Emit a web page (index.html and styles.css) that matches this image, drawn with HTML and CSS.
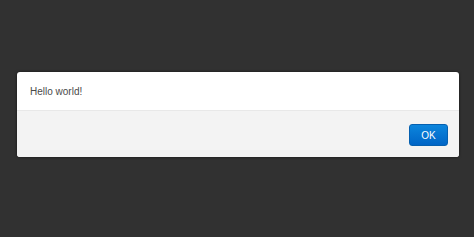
FILE: index.html
```html
<!DOCTYPE html>
<html>
<head>
<meta charset="utf-8">
<link rel="stylesheet" href="styles.css">
</head>
<body>
<div class="page">
  <div class="dialog">
    <div class="dialog-body">Hello world!</div>
    <div class="dialog-footer">
      <button class="btn-ok">OK</button>
    </div>
  </div>
</div>
</body>
</html>
```
FILE: styles.css
```css
html, body {
  margin: 0;
  padding: 0;
  background: #313131;
  height: 100%;
}
.page {
  padding: 72px 15px 0 17px;
}
.dialog {
  background: #fff;
  border-radius: 3px;
  box-shadow: 0 0 3px rgba(0,0,0,0.6);
  overflow: hidden;
  font-family: "Liberation Sans", Arial, sans-serif;
}
.dialog-body {
  height: 38px;
  padding: 0 13px;
  display: flex;
  align-items: center;
  font-size: 10px;
  color: #4a4a4a;
  border-bottom: 1px solid #e8e8e8;
}
.dialog-footer {
  background: #f3f3f3;
  height: 46px;
  display: flex;
  justify-content: flex-end;
  align-items: center;
  padding: 0 11px;
}
.btn-ok {
  width: 39px;
  height: 22px;
  border: 1px solid #0560b0;
  border-radius: 3px;
  background: linear-gradient(#0c85dc, #0065c6);
  color: #fff;
  font-family: "Liberation Sans", Arial, sans-serif;
  font-size: 10px;
  padding: 0;
  margin-top: 2px;
}
```
